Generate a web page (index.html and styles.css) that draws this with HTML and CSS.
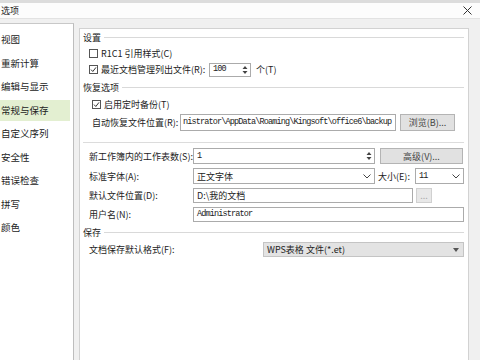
FILE: index.html
```html
<!DOCTYPE html>
<html lang="zh-CN">
<head>
    <meta charset="UTF-8">
    <link rel="stylesheet" href="styles.css">
</head>
<body>
    <div class="window">
        <div class="title-bar">
            <span class="title">选项</span>
            <svg class="close-icon" viewBox="0 0 9 9">
                <path d="M0.5 0.5 L8.5 8.5 M8.5 0.5 L0.5 8.5" stroke="#333" stroke-width="1" fill="none"/>
            </svg>
        </div>

        <div class="main">
            <!-- left category list -->
            <ul class="nav-list">
                <li class="nav-item">视图</li>
                <li class="nav-item">重新计算</li>
                <li class="nav-item">编辑与显示</li>
                <li class="nav-item active">常规与保存</li>
                <li class="nav-item">自定义序列</li>
                <li class="nav-item">安全性</li>
                <li class="nav-item">错误检查</li>
                <li class="nav-item">拼写</li>
                <li class="nav-item">颜色</li>
            </ul>

            <!-- settings pane -->
            <div class="pane">
                <div class="group-title first"><span>设置</span><div class="group-line"></div></div>

                <div class="row row-check">
                    <svg class="check-box" viewBox="0 0 9 9"><rect x="0.5" y="0.5" width="8" height="8" fill="#fff" stroke="#555"/></svg>
                    <span>R1C1 引用样式(C)</span>
                </div>
                <div class="row row-recent">
                    <svg class="check-box" viewBox="0 0 9 9"><rect x="0.5" y="0.5" width="8" height="8" fill="#fff" stroke="#555"/><polyline points="2,4.6 3.8,6.5 7,2.4" fill="none" stroke="#333"/></svg>
                    <span class="recent-label">最近文档管理列出文件(R):</span>
                    <div class="field spin-field recent-count">
                        <span class="mono">100</span>
                        <svg class="spin" viewBox="0 0 8 12"><path d="M1.5 5 L4 2 L6.5 5 Z M1.5 7 L4 10 L6.5 7 Z" fill="#444"/></svg>
                    </div>
                    <span class="unit">个(T)</span>
                </div>

                <div class="group-title second"><span>恢复选项</span><div class="group-line"></div></div>

                <div class="row row-check deep">
                    <svg class="check-box" viewBox="0 0 9 9"><rect x="0.5" y="0.5" width="8" height="8" fill="#fff" stroke="#555"/><polyline points="2,4.6 3.8,6.5 7,2.4" fill="none" stroke="#333"/></svg>
                    <span>启用定时备份(T)</span>
                </div>
                <div class="row row-backup deep">
                    <span class="backup-label">自动恢复文件位置(R):</span>
                    <div class="field path-field"><span class="mono">nistrator\AppData\Roaming\Kingsoft\office6\backup</span></div>
                    <button class="btn browse-btn">浏览(B)...</button>
                </div>

                <div class="separator"></div>

                <div class="row row-form">
                    <span class="form-label">新工作簿内的工作表数(S):</span>
                    <div class="field spin-field wide-field">
                        <span class="mono">1</span>
                        <svg class="spin" viewBox="0 0 8 12"><path d="M1.5 5 L4 2 L6.5 5 Z M1.5 7 L4 10 L6.5 7 Z" fill="#444"/></svg>
                    </div>
                    <button class="btn advanced-btn">高级(V)...</button>
                </div>
                <div class="row row-form">
                    <span class="form-label">标准字体(A):</span>
                    <div class="field select-field wide-field">
                        <span>正文字体</span>
                        <svg class="chevron" viewBox="0 0 8 5"><polyline points="0.5,0.5 4,4 7.5,0.5" fill="none" stroke="#444"/></svg>
                    </div>
                    <span class="size-label">大小(E):</span>
                    <div class="field select-field size-field">
                        <span class="mono">11</span>
                        <svg class="chevron" viewBox="0 0 8 5"><polyline points="0.5,0.5 4,4 7.5,0.5" fill="none" stroke="#444"/></svg>
                    </div>
                </div>
                <div class="row row-form short">
                    <span class="form-label">默认文件位置(D):</span>
                    <div class="field folder-field"><span>D:\我的文档</span></div>
                    <button class="btn dots-btn" disabled>...</button>
                </div>
                <div class="row row-form short">
                    <span class="form-label">用户名(N):</span>
                    <div class="field user-field"><span class="mono">Administrator</span></div>
                </div>

                <div class="group-title third"><span>保存</span><div class="group-line"></div></div>

                <div class="row row-form short">
                    <span class="format-label">文档保存默认格式(F):</span>
                    <div class="field format-field">
                        <span>WPS表格 文件(*.et)</span>
                        <svg class="drop-arrow" viewBox="0 0 6 4"><path d="M0 0 L6 0 L3 4 Z" fill="#555"/></svg>
                    </div>
                </div>
            </div>
        </div>
    </div>
</body>
</html>
```

FILE: styles.css
```css
* {
    box-sizing: border-box;
}

body {
    margin: 0;
    width: 480px;
    height: 360px;
    overflow: hidden;
    background-color: #f0f0f0;
    font-family: "Noto Sans CJK SC", "Liberation Sans", sans-serif;
    font-size: 9px;
    color: #222;
    line-height: 1;
}

.window {
    height: 360px;
    display: flex;
    flex-direction: column;
}

.title-bar {
    height: 19px;
    background-color: #fcfcfc;
    border-top: 3px solid #dcdcdc;
    border-bottom: 1px solid #e2e2e2;
    display: flex;
    align-items: center;
    justify-content: space-between;
    padding: 0 8px 0 1px;
}

.close-icon {
    width: 9px;
    height: 9px;
}

.main {
    flex: 1;
    display: flex;
    min-height: 0;
}

/* left category list */
.nav-list {
    list-style: none;
    margin: 4px 0 0 0;
    padding: 5px 0 0 0;
    width: 74px;
    background-color: #fff;
    border-top: 1px solid #c8c8c8;
    border-right: 1px solid #bdbdbd;
    overflow: hidden;
}

.nav-item {
    height: 21.5px;
    line-height: 21.5px;
    margin: 0 3px 2px 0;
    padding-left: 1px;
    font-size: 9.5px;
    white-space: nowrap;
}

.nav-item.active {
    background-color: #e3efd1;
}

/* settings pane */
.pane {
    margin: 9px 0 0 5px;
    width: 390px;
    background-color: #fff;
    border: 1px solid #d2d2d2;
    border-bottom: none;
    padding: 0 4px 0 3px;
}

.group-title {
    display: flex;
    align-items: center;
    height: 16px;
}

.group-title.second {
    height: 18px;
}

.group-title.third {
    height: 20px;
}

.group-line {
    flex: 1;
    margin-left: 3px;
    border-top: 1px solid #d9d9d9;
}

.separator {
    margin: 10px 0 5px 0;
    border-top: 1px solid #dcdcdc;
}

.row {
    display: flex;
    align-items: center;
    padding-left: 6px;
    height: 16px;
}

.row.deep {
    padding-left: 9px;
}

.row-check {
    gap: 3px;
}

.check-box {
    width: 9px;
    height: 9px;
    flex: none;
}

.row-recent {
    height: 17px;
    gap: 3px;
}

.recent-label {
    width: 105px;
}

.row-backup {
    height: 20px;
}

.backup-label {
    width: 88px;
}

.row-form + .row-form {
    margin-top: 4px;
}

.row.short {
    height: 15px;
}

.form-label {
    width: 104px;
    white-space: nowrap;
}

.format-label {
    width: 174px;
}

/* input boxes */
.field {
    height: 100%;
    border: 1px solid #ababab;
    background-color: #fff;
    display: flex;
    align-items: center;
    padding-left: 3px;
    overflow: hidden;
    white-space: nowrap;
}

.mono {
    font-family: "Liberation Mono", "Noto Sans CJK SC", monospace;
    font-size: 8.5px;
    letter-spacing: -0.85px;
}

.spin-field,
.select-field {
    justify-content: space-between;
    padding-right: 1px;
}

.spin {
    width: 8px;
    height: 12px;
    flex: none;
}

.chevron {
    width: 8px;
    height: 5px;
    margin-right: 2px;
}

.recent-count {
    width: 42px;
    height: 14px;
}

.unit {
    margin-left: 2px;
}

.path-field {
    width: 216px;
    height: 17px;
    padding-left: 2px;
}

.wide-field {
    width: 182px;
}

.size-label {
    width: 37px;
    margin-left: 3px;
}

.size-field {
    flex: 1;
}

.folder-field {
    width: 220px;
}

.user-field {
    flex: 1;
}

.format-field {
    flex: 1;
    background-color: #e3e3e3;
    border-color: #c4c4c4;
    justify-content: space-between;
    padding-right: 4px;
}

.drop-arrow {
    width: 6px;
    height: 4px;
}

/* buttons */
.btn {
    font-family: inherit;
    font-size: 9px;
    color: #444;
    background-color: #e1e1e1;
    border: 1px solid #b4b4b4;
    border-radius: 0;
    padding: 0;
    height: 100%;
}

.browse-btn {
    width: 55px;
    height: 17px;
    margin-left: 4px;
}

.advanced-btn {
    width: 83px;
    margin-left: 5px;
}

.dots-btn {
    width: 16px;
    margin-left: 3px;
    color: #aaa;
    background-color: #e8e8e8;
    border-color: #d0d0d0;
}
```
